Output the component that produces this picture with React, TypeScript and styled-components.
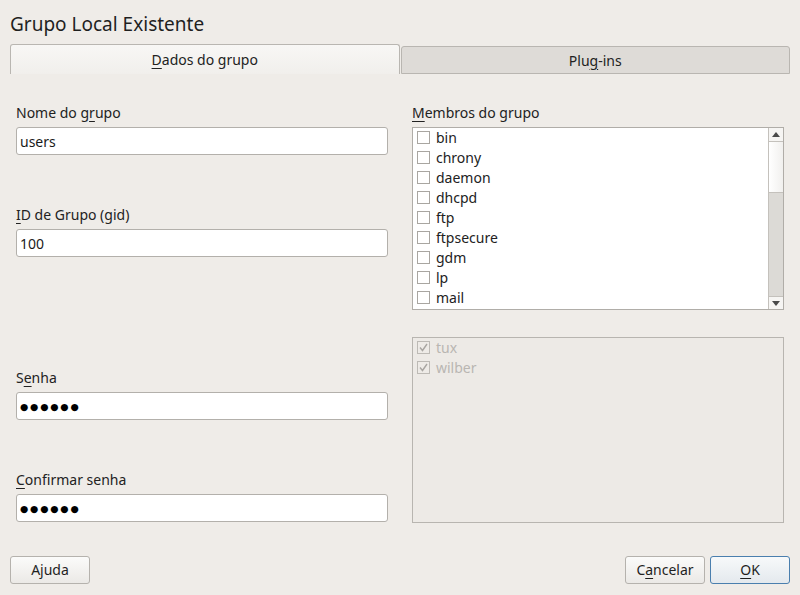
import React from "react";
import styled, { createGlobalStyle } from "styled-components";

const Global = createGlobalStyle`
  html, body { margin: 0; padding: 0; background: #efece8; }
  body { font-family: "Noto Sans", "Open Sans", sans-serif; color: #2a2a2a; }
  * { box-sizing: border-box; }
`;

const Window = styled.div`
  width: 800px;
  height: 595px;
  background: #efece8;
  display: flex;
  flex-direction: column;
  padding: 0 10px;
`;

const Title = styled.h1`
  margin: 0;
  padding-top: 11px;
  height: 44px;
  font-size: 19px;
  font-weight: 400;
  line-height: 26px;
  color: #1f1f1f;
`;

const TabBar = styled.div`
  display: flex;
  align-items: flex-end;
  height: 30px;
`;

const Tab = styled.div<{ $active?: boolean }>`
  flex: 1;
  height: ${(p) => (p.$active ? "30px" : "28px")};
  display: flex;
  align-items: center;
  justify-content: center;
  font-size: 14px;
  color: #222;
  border: 1px solid #b9b6b1;
  border-bottom: ${(p) => (p.$active ? "none" : "1px solid #b9b6b1")};
  border-radius: 3px 3px 0 0;
  background: ${(p) =>
    p.$active ? "linear-gradient(#f8f7f5, #f1efec)" : "#dedbd7"};
  margin-left: ${(p) => (p.$active ? "0" : "1px")};
`;

const U = styled.span`
  text-decoration: underline;
  text-underline-offset: 3px;
`;

const Body = styled.div`
  flex: 1;
  display: grid;
  grid-template-columns: 372px 372px;
  column-gap: 24px;
  padding: 29px 6px 0;
`;

const Column = styled.div`
  display: flex;
  flex-direction: column;
`;

const Label = styled.div<{ $top?: number }>`
  font-size: 14px;
  line-height: 20px;
  color: #222;
  margin-top: ${(p) => p.$top ?? 0}px;
  margin-bottom: 4px;
`;

const Field = styled.div`
  height: 28px;
  background: #fff;
  border: 1px solid #b3b0ab;
  border-radius: 3px;
  font-size: 14px;
  color: #1a1a1a;
  display: flex;
  align-items: center;
  padding-left: 3px;
`;

const Dots = styled.span`
  font-family: "DejaVu Sans", sans-serif;
  font-size: 9.5px;
  letter-spacing: 1.8px;
  color: #000;
`;

const ListBox = styled.div`
  height: 183px;
  background: #fff;
  border: 1px solid #b0ada8;
  display: flex;
`;

const Items = styled.div`
  flex: 1;
  padding-top: 0;
  margin-top: -1px;
`;

const DisabledBox = styled.div`
  margin-top: 27px;
  height: 186px;
  border: 1px solid #b8b5b0;
  background: #edeae6;
  padding-top: 0;
`;

const DisabledItems = styled.div`
  margin-top: -1px;
`;

const Row = styled.div<{ $disabled?: boolean }>`
  height: 20px;
  display: flex;
  align-items: center;
  padding-left: 4px;
  font-size: 14px;
  color: ${(p) => (p.$disabled ? "#b9b6b2" : "#222")};
`;

const Box = styled.span<{ $disabled?: boolean }>`
  width: 13px;
  height: 13px;
  border: 1px solid ${(p) => (p.$disabled ? "#bdbab5" : "#a9a6a1")};
  background: ${(p) => (p.$disabled ? "#eeebe7" : "#fff")};
  margin-right: 6px;
  display: flex;
  align-items: center;
  justify-content: center;
`;

const ScrollBar = styled.div`
  width: 15px;
  border-left: 1px solid #c4c1bc;
  display: flex;
  flex-direction: column;
  background: #dcdad6;
`;

const Arrow = styled.div`
  height: 14px;
  background: #f6f5f3;
  display: flex;
  align-items: center;
  justify-content: center;
`;

const ArrowUp = styled(Arrow)`
  border-bottom: 1px solid #c4c1bc;
`;

const ArrowDown = styled(Arrow)`
  border-top: 1px solid #c4c1bc;
  height: 13px;
`;

const Thumb = styled.div`
  height: 51px;
  background: linear-gradient(90deg, #ffffff, #f1f0ee);
  border-bottom: 1px solid #c4c1bc;
`;

const Trough = styled.div`
  flex: 1;
`;

const Footer = styled.div`
  height: 39px;
  display: flex;
  align-items: flex-start;
  gap: 5px;
  padding-bottom: 11px;
`;

const Spacer = styled.div`
  flex: 1;
`;

const Button = styled.div<{ $default?: boolean }>`
  width: 80px;
  height: 28px;
  border: 1px solid ${(p) => (p.$default ? "#4a7fae" : "#b5b2ad")};
  border-radius: 3px;
  background: ${(p) =>
    p.$default
      ? "linear-gradient(#f7f9fa, #e4e9ed)"
      : "linear-gradient(#fbfbfa, #ebe9e6)"};
  font-size: 14px;
  color: #1f1f1f;
  display: flex;
  align-items: center;
  justify-content: center;
  padding-bottom: 1px;
`;

const Check = () => (
  <svg width="11" height="11" viewBox="0 0 11 11">
    <path d="M2 5.5 L4.5 8.5 L9 2" fill="none" stroke="#a9a6a2" strokeWidth="1.4" />
  </svg>
);

const Triangle = ({ up }: { up?: boolean }) => (
  <svg width="8" height="5" viewBox="0 0 8 5">
    <path d={up ? "M0 5 L4 0 L8 5 Z" : "M0 0 L4 5 L8 0 Z"} fill="#4a4a4a" />
  </svg>
);

const users = ["bin", "chrony", "daemon", "dhcpd", "ftp", "ftpsecure", "gdm", "lp", "mail"];
const members = ["tux", "wilber"];

export default function App() {
  return (
    <Window>
      <Global />
      <Title>Grupo Local Existente</Title>
      <TabBar>
        <Tab $active>
          <span>
            <U>D</U>ados do grupo
          </span>
        </Tab>
        <Tab>
          <span>
            Plu<U>g</U>-ins
          </span>
        </Tab>
      </TabBar>
      <Body>
        <Column>
          <Label>
            Nome do g<U>r</U>upo
          </Label>
          <Field>users</Field>
          <Label $top={50}>
            <U>I</U>D de Grupo (gid)
          </Label>
          <Field>100</Field>
          <Label $top={111}>
            S<U>e</U>nha
          </Label>
          <Field>
            <Dots>●●●●●●</Dots>
          </Field>
          <Label $top={50}>
            <U>C</U>onfirmar senha
          </Label>
          <Field>
            <Dots>●●●●●●</Dots>
          </Field>
        </Column>
        <Column>
          <Label>
            <U>M</U>embros do grupo
          </Label>
          <ListBox>
            <Items>
              {users.map((u) => (
                <Row key={u}>
                  <Box />
                  {u}
                </Row>
              ))}
            </Items>
            <ScrollBar>
              <ArrowUp>
                <Triangle up />
              </ArrowUp>
              <Thumb />
              <Trough />
              <ArrowDown>
                <Triangle />
              </ArrowDown>
            </ScrollBar>
          </ListBox>
          <DisabledBox>
            <DisabledItems>
              {members.map((m) => (
                <Row key={m} $disabled>
                  <Box $disabled>
                    <Check />
                  </Box>
                  {m}
                </Row>
              ))}
            </DisabledItems>
          </DisabledBox>
        </Column>
      </Body>
      <Footer>
        <Button>Ajuda</Button>
        <Spacer />
        <Button>
          <span>
            C<U>a</U>ncelar
          </span>
        </Button>
        <Button $default>
          <span>
            <U>O</U>K
          </span>
        </Button>
      </Footer>
    </Window>
  );
}
